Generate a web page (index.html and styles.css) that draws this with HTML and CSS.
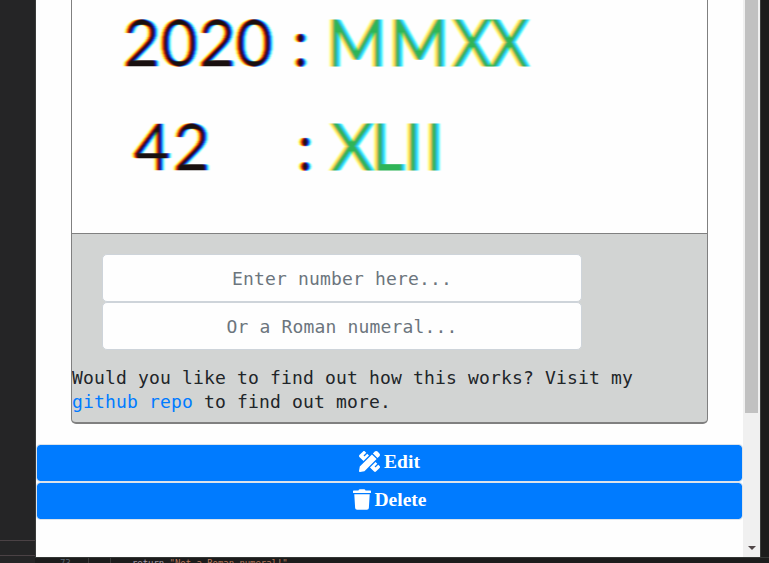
FILE: index.html
```html
<!DOCTYPE html>
<html lang="en">
<head>
<meta charset="utf-8">
<title>Roman numerals</title>
<link rel="stylesheet" href="styles.css">
</head>
<body>
<div class="desktop">
  <aside class="sidebar"><div class="sidebar-row"></div></aside>
  <div class="window">
    <main class="page">
      <article class="card">
        <svg class="picture" viewBox="72 0 635 233" width="635" height="233">
          <defs>
            <filter id="fringe" filterUnits="userSpaceOnUse" x="62" y="-10" width="655" height="253" color-interpolation-filters="sRGB">
              <feGaussianBlur in="SourceGraphic" stdDeviation="1.3 0.7" result="soft"/>
              <feColorMatrix in="soft" values="1 0 0 0 0  0 0 0 0 0  0 0 0 0 0  0 0 0 1 0" result="r"/>
              <feOffset in="r" dx="2" result="r2"/>
              <feColorMatrix in="soft" values="0 0 0 0 0  0 1 0 0 0  0 0 0 0 0  0 0 0 1 0" result="g"/>
              <feColorMatrix in="soft" values="0 0 0 0 0  0 0 0 0 0  0 0 1 0 0  0 0 0 1 0" result="b"/>
              <feOffset in="b" dx="-2" result="b2"/>
              <feBlend in="r2" in2="g" mode="screen" result="rg"/>
              <feBlend in="rg" in2="b2" mode="screen"/>
            </filter>
          </defs>
          <g filter="url(#fringe)">
            <rect class="paper" x="52" y="-20" width="675" height="273"/>
            <text class="arabic" x="123 160.5 198.5 235.5" y="66">2020</text>
            <text class="arabic" x="292.5" y="66">:</text>
            <text class="roman" x="326.5" y="66">MM<tspan x="453" textLength="75" lengthAdjust="spacingAndGlyphs">XX</tspan></text>
            <text class="arabic" x="133.5 173" y="170">42</text>
            <text class="arabic" x="297" y="170">:</text>
            <text class="roman" x="331 371 404 425" y="170">XLII</text>
          </g>
        </svg>
        <section class="converter">
          <form class="fields">
            <input class="field" type="text" placeholder="Enter number here...">
            <input class="field" type="text" placeholder="Or a Roman numeral...">
          </form>
          <p class="note">Would you like to find out how this works? Visit my <a class="link" href="#">github repo</a> to find out more.</p>
        </section>
      </article>
      <div class="actions">
        <button class="action" type="button">
          <svg class="icon" viewBox="0 0 512 512" width="21" height="21"><path d="M109.46 244.04l134.58-134.56-44.12-44.12-61.68 61.68a7.919 7.919 0 0 1-11.21 0l-11.21-11.21c-3.1-3.1-3.1-8.12 0-11.21l61.68-61.68-33.64-33.65C131.47-3.1 111.39-3.1 99 9.29L9.29 99c-12.38 12.39-12.39 32.47 0 44.86l100.17 100.18zm388.47-116.8c18.76-18.76 18.75-49.17 0-67.93l-45.25-45.25c-18.76-18.76-49.18-18.76-67.95 0l-46.02 46.01 113.2 113.2 46.02-46.03zM316.08 82.71l-297 296.96L.32 487.11c-2.53 14.49 10.09 27.11 24.59 24.56l107.45-18.84L429.28 195.9 316.08 82.71zm186.63 285.43l-33.64-33.64-61.68 61.68c-3.1 3.1-8.12 3.1-11.21 0l-11.21-11.21c-3.09-3.1-3.09-8.12 0-11.21l61.68-61.68-44.14-44.14L267.93 402.5l100.21 100.2c12.39 12.39 32.47 12.39 44.86 0l89.71-89.7c12.39-12.39 12.39-32.47 0-44.86z"/></svg>
          <span>Edit</span>
        </button>
        <button class="action" type="button">
          <svg class="icon" viewBox="0 0 448 512" width="18" height="21"><path d="M432 32H312l-9.4-18.7A24 24 0 0 0 281.1 0H166.8a23.72 23.72 0 0 0-21.4 13.3L136 32H16A16 16 0 0 0 0 48v32a16 16 0 0 0 16 16h416a16 16 0 0 0 16-16V48a16 16 0 0 0-16-16zM53.2 467a48 48 0 0 0 47.9 45h245.8a48 48 0 0 0 47.9-45L416 128H32z"/></svg>
          <span>Delete</span>
        </button>
      </div>
    </main>
    <div class="scrollbar">
      <div class="thumb"></div>
      <svg class="arrow" viewBox="0 0 8 4" width="8" height="4"><path d="M0 0H8L4 4Z"/></svg>
    </div>
  </div>
  <div class="edge"></div>
  <footer class="editor">
    <span class="line-number">73</span>
    <span class="guide"></span>
    <code class="code"><span class="keyword">return</span> <span class="string">"Not a Roman numeral!"</span></code>
  </footer>
</div>
</body>
</html>
```
FILE: styles.css
```css
* { box-sizing: border-box; }

body {
  margin: 0;
  overflow: hidden;
}

.desktop {
  display: grid;
  grid-template: 557px 6px / 35px 726px 8px;
  width: 769px;
  height: 563px;
  overflow: hidden;
  background: #1c1c1c;
}

.sidebar {
  grid-row: 1 / 3;
  display: flex;
  flex-direction: column;
  justify-content: flex-end;
  padding-bottom: 7px;
  background: #252526;
}

.sidebar-row {
  height: 16px;
  border: solid #4b4245;
  border-width: 1px 0;
}

.window {
  display: flex;
  border: solid #3a3c3b;
  border-width: 0 1px;
  background: #fefefe;
  overflow: hidden;
}

.page { width: 707px; }

.card {
  width: 637px;
  height: 424px;
  margin: 0 0 20px 35px;
  border: 1px solid #808080;
  border-top: 0;
  border-bottom-width: 2px;
  border-radius: 0 0 5px 5px;
  background: #d2d4d3;
  overflow: hidden;
}

.picture { display: block; }
.paper { fill: #fefefe; }

.arabic,
.roman {
  font: 64px Lato, sans-serif;
  stroke-width: 0.5px;
}

.arabic { fill: #19100f; stroke: #19100f; }
.roman { fill: #2fb457; stroke: #2fb457; stroke-width: 1.2px; letter-spacing: 3px; }
.roman tspan { letter-spacing: 0; }

.converter {
  padding-top: 20px;
  border-top: 1px solid #808080;
  font: 18px/24px "DejaVu Sans Mono", monospace;
  letter-spacing: 0.163px;
  color: #212529;
}

.fields {
  display: flex;
  flex-direction: column;
  width: 480px;
  margin: 0 0 16px 30px;
}

.field {
  height: 48px;
  padding: 8px 16px;
  border: 1px solid #ced4da;
  border-radius: 5px;
  background: #fefefe;
  font: inherit;
  letter-spacing: inherit;
  text-align: center;
}

.field::placeholder { color: #6c757d; opacity: 1; }
.note { margin: 0; }
.link { color: #007bff; text-decoration: none; }

.actions {
  display: flex;
  flex-direction: column;
}

.action {
  display: flex;
  align-items: center;
  justify-content: center;
  gap: 4px;
  height: 38px;
  padding: 0 0 3px;
  border: 1px solid #dce3ea;
  border-radius: 4px;
  background: #007bff;
  background-clip: padding-box;
  color: #fff;
  font: bold 19.5px/24px "Liberation Serif", serif;
}

.icon { fill: #fff; }

.scrollbar {
  display: flex;
  flex-direction: column;
  justify-content: space-between;
  width: 17px;
  padding: 0 2px 7px;
  background: #f0f0f0;
}

.thumb {
  width: 13px;
  height: 413px;
  background: #c1c1c1;
}

.arrow { margin-left: 3px; fill: #504648; }

.editor {
  grid-column: 2 / 4;
  display: flex;
  padding-left: 25px;
  border-top: 1px solid #343735;
  font: 9px/11px "DejaVu Sans Mono", monospace;
  letter-spacing: -0.05px;
  overflow: hidden;
}

.line-number {
  width: 28px;
  color: #596570;
}

.guide {
  width: 22px;
  border-left: 1px solid #3a3a3a;
}

.code {
  padding-left: 21px;
  border-left: 1px solid #3a3a3a;
  font: inherit;
}

.keyword { color: #a09aa8; }
.string { color: #b5765a; }
```
